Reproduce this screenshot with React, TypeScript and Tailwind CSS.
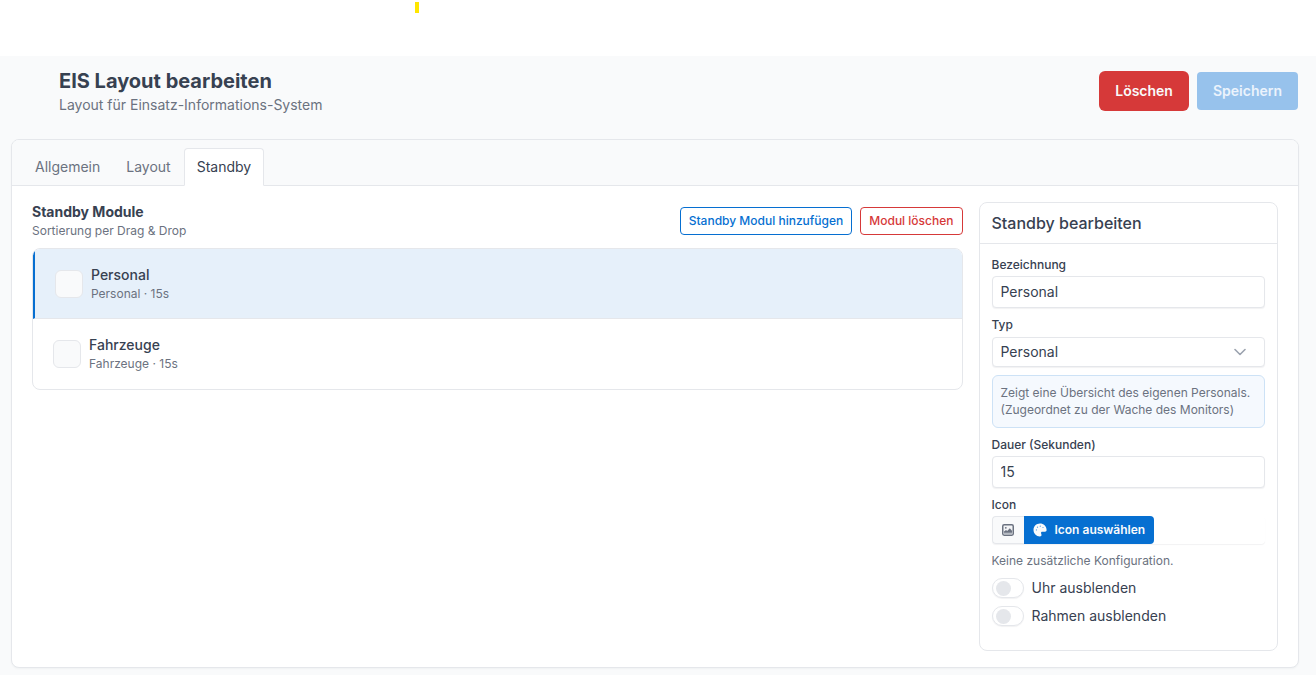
import { useState } from "react";

const tabs = ["Allgemein", "Layout", "Standby"];
const modules = [
  { name: "Personal", type: "Personal", seconds: 15 },
  { name: "Fahrzeuge", type: "Fahrzeuge", seconds: 15 },
];

const fieldClass =
  "block w-full rounded border border-[#e5e7eb] bg-white px-2 text-sm text-[#374151] shadow-[0_1px_1px_rgba(31,41,55,0.06)] outline-none";
const labelClass = "block text-[12px] font-medium leading-[18px] text-[#374151]";

function ImageIcon() {
  return (
    <svg viewBox="0 0 12 12" className="size-3" aria-hidden="true">
      <rect x="0.75" y="0.75" width="10.5" height="10.5" rx="1.4" fill="#f3f4f6" stroke="#6b7280" strokeWidth="1.5" />
      <path d="M1.5 8.6h9v1.6h-9z" fill="#b6bbc3" />
      <circle cx="3.8" cy="3.8" r="0.9" fill="#6b7280" />
      <path d="M2 8.8V7.6l2-1.7 1.2 1L7.8 4.2 10 6.8v2z" fill="#6b7280" />
    </svg>
  );
}

function PaletteIcon() {
  return (
    <svg viewBox="0 0 14 14" className="size-[14px]" aria-hidden="true">
      <path
        fill="#f9fafb"
        d="M7 .6C3.3.6.5 3.4.5 7s2.8 6.400 6.400 6.400c1.100 0 1.700-.8 1.600-1.700-.1-.7-.5-1-.5-1.700 0-.8.6-1.300 1.400-1.300H12c1 0 1.600-.7 1.600-1.700C13.500 3.300 10.600.6 7 .6z"
      />
      <g fill="#066fd1" fillOpacity="0.7">
        <circle cx="3.4" cy="6.9" r="0.6" />
        <circle cx="4.5" cy="4.2" r="0.6" />
        <circle cx="7.3" cy="3.2" r="0.6" />
        <circle cx="10" cy="4.5" r="0.6" />
      </g>
    </svg>
  );
}

function Switch({ id, label }: { id: string; label: string }) {
  return (
    <div className="mt-2 flex h-5 items-center gap-2">
      <input
        id={id}
        type="checkbox"
        role="switch"
        className="flex h-5 w-8 shrink-0 appearance-none items-center rounded-full border border-[#e5e7eb] bg-white px-[3px] shadow-[0_1px_1px_rgba(31,41,55,0.06)] before:size-[15px] before:rounded-full before:bg-[#e5e7eb] checked:justify-end checked:bg-[#066fd1] checked:before:bg-white"
      />
      <label htmlFor={id} className="text-sm">{label}</label>
    </div>
  );
}

export default function App() {
  const [name, setName] = useState("Personal");
  const [duration, setDuration] = useState("15");
  return (
    <div className="min-h-screen bg-[#f9fafb] font-[Inter,sans-serif] text-sm text-[#374151]">
      <div className="h-14 bg-white pt-0.5">
        <div className="ml-[415px] h-[11px] w-1 bg-[#ffe600]" />
      </div>

      <header className="flex items-start justify-between pt-[11px] pr-[18px] pl-[59px]">
        <div>
          <h1 className="text-xl font-bold leading-7">EIS Layout bearbeiten</h1>
          <p className="text-sm leading-5 text-[#6b7280]">Layout für Einsatz-Informations-System</p>
        </div>
        <div className="flex items-center gap-2 pt-1">
          <button type="button" className="h-10 rounded-md bg-[#d63939] px-4 font-semibold text-[#f9fafb]">Löschen</button>
          <button type="button" disabled className="h-[38px] rounded bg-[#97c2ec] px-4 font-semibold text-[#ebf3fc]">Speichern</button>
        </div>
      </header>

      <main className="pt-6 pr-[17px] pb-2 pl-[11px]">
        <section className="overflow-hidden rounded-lg border border-[#e5e7eb] bg-white shadow-[0_1px_2px_rgba(31,41,55,0.04)]">
          <nav className="border-b border-[#e5e7eb] bg-[#f9fafb] px-2.5 pt-2">
            <div role="tablist" className="-mb-px flex">
              {tabs.map((tab) => (
                <button
                  key={tab}
                  type="button"
                  role="tab"
                  aria-selected={tab === "Standby"}
                  className={
                    tab === "Standby"
                      ? "h-[38px] rounded-t border border-b-white border-[#e5e7eb] bg-white px-3 text-[#374151]"
                      : "h-[38px] border border-transparent px-3 text-[#6b7280]"
                  }
                >
                  {tab}
                </button>
              ))}
            </div>
          </nav>

          <div className="grid grid-cols-12 items-start gap-4 px-5 py-4">
            <div className="col-span-9">
              <div className="flex items-start justify-between">
                <div>
                  <h2 className="text-sm font-bold leading-5">Standby Module</h2>
                  <p className="text-[12px] leading-[18px] text-[#6b7280]">Sortierung per Drag &amp; Drop</p>
                </div>
                <div className="flex gap-2 pt-[5px]">
                  <button type="button" className="h-7 rounded border border-[#066fd1] px-2 text-[12px] font-medium text-[#066fd1]">Standby Modul hinzufügen</button>
                  <button type="button" className="h-7 rounded border border-[#d63939] px-2 text-[12px] font-medium text-[#d63939]">Modul löschen</button>
                </div>
              </div>

              <ul className="mt-2 overflow-hidden rounded-lg border border-[#e5e7eb]">
                {modules.map((m, i) => (
                  <li
                    key={m.name}
                    className={
                      i === 0
                        ? "flex h-[70px] items-center gap-2 border-b border-l-2 border-b-[#e5e7eb] border-l-[#066fd1] bg-[#e6f0fa] px-5"
                        : "flex h-[70px] items-center gap-2 px-5"
                    }
                  >
                    <span className="size-7 rounded-md border border-[#e5e7eb] bg-[#f9fafb]" />
                    <div>
                      <div className="font-medium leading-5">{m.name}</div>
                      <div className="text-[12px] leading-[18px] text-[#6b7280]">{m.type} · {m.seconds}s</div>
                    </div>
                  </li>
                ))}
              </ul>
            </div>

            <aside className="col-span-3 rounded-lg border border-[#e5e7eb] bg-white">
              <h3 className="border-b border-[#e5e7eb] px-3 py-2 text-base font-medium leading-6">Standby bearbeiten</h3>
              <form className="px-3 pt-3 pb-6">
                <label htmlFor="name" className={labelClass}>Bezeichnung</label>
                <input id="name" value={name} onChange={(e) => setName(e.target.value)} className={`${fieldClass} mt-0.5 h-8 pb-0.5`} />

                <label htmlFor="type" className={`${labelClass} mt-2`}>Typ</label>
                <div className="mt-[3px] grid items-center">
                  <select id="type" className={`${fieldClass} col-start-1 row-start-1 h-[30px] appearance-none`}>
                    <option>Personal</option>
                    <option>Fahrzeuge</option>
                  </select>
                  <svg viewBox="0 0 12 8" className="pointer-events-none col-start-1 row-start-1 mr-[19px] h-2 w-3 justify-self-end" aria-hidden="true">
                    <path d="M1 1.5l5 5 5-5" fill="none" stroke="#9ca3af" strokeWidth="1.6" strokeLinecap="round" strokeLinejoin="round" />
                  </svg>
                </div>

                <p className="mt-2 rounded-md border border-[#cde2f6] bg-[#f5f9fe] px-2 pt-2 pb-[9px] text-[12px] leading-[17px] text-[#6b7280]">
                  Zeigt eine Übersicht des eigenen Personals. (Zugeordnet zu der Wache des Monitors)
                </p>

                <label htmlFor="duration" className={`${labelClass} mt-2`}>Dauer (Sekunden)</label>
                <input id="duration" inputMode="numeric" value={duration} onChange={(e) => setDuration(e.target.value)} className={`${fieldClass} mt-0.5 h-8 pb-0.5`} />

                <label htmlFor="icon" className={`${labelClass} mt-2`}>Icon</label>
                <div className="mt-0.5 flex h-7 rounded shadow-[0_1px_1px_rgba(31,41,55,0.06)]">
                  <span className="flex w-8 items-center justify-center rounded-l border border-r-0 border-[#e5e7eb] bg-[#f9fafb]">
                    <ImageIcon />
                  </span>
                  <button id="icon" type="button" className="flex items-center gap-2 rounded-r bg-[#066fd1] px-[9px] text-[12px] font-semibold text-[#f9fafb]">
                    <PaletteIcon />
                    Icon auswählen
                  </button>
                </div>

                <p className="mt-2 text-[12px] leading-[18px] text-[#6b7280]">Keine zusätzliche Konfiguration.</p>
                <Switch id="hide-clock" label="Uhr ausblenden" />
                <Switch id="hide-frame" label="Rahmen ausblenden" />
              </form>
            </aside>
          </div>
        </section>
      </main>
    </div>
  );
}
